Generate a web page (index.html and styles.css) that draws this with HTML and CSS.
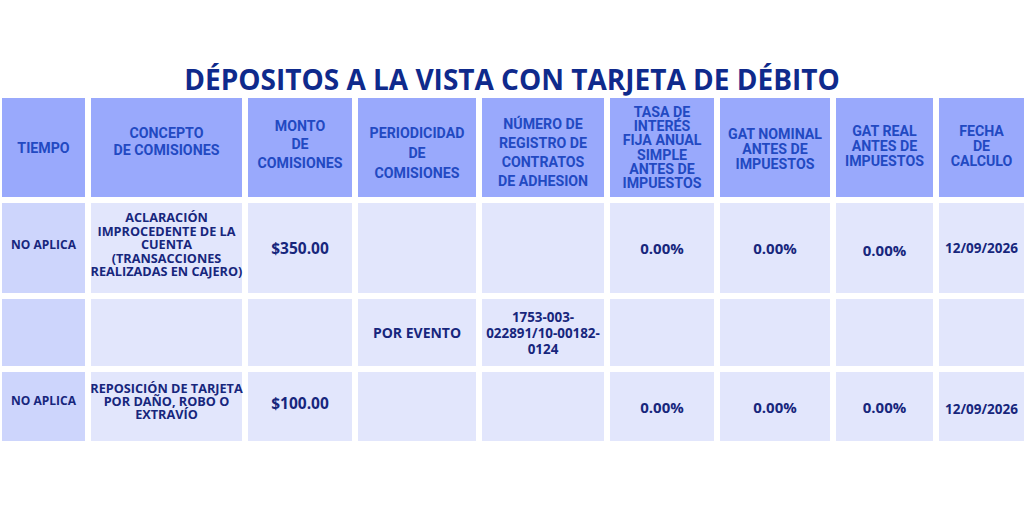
FILE: index.html
```html
<!DOCTYPE html>
<html lang="es">
<head>
<meta charset="utf-8">
<title>Depósitos a la vista con tarjeta de débito</title>
<link rel="stylesheet" href="styles.css">
</head>
<body>
<main class="page">
  <h1 class="title">DÉPOSITOS A LA VISTA CON TARJETA DE DÉBITO</h1>
  <div class="table">
    <div class="th">TIEMPO</div>
    <div class="th lh17 up6">CONCEPTO<br>DE COMISIONES</div>
    <div class="th lh18 up3">MONTO<br>DE<br>COMISIONES</div>
    <div class="th lh20 down5">PERIODICIDAD<br>DE<br>COMISIONES</div>
    <div class="th lh19 down5">NÚMERO DE<br>REGISTRO DE<br>CONTRATOS<br>DE ADHESION</div>
    <div class="th lh14">TASA DE<br>INTERÉS<br>FIJA ANUAL<br>SIMPLE<br>ANTES DE<br>IMPUESTOS</div>
    <div class="th lh15 down2">GAT NOMINAL<br>ANTES DE<br>IMPUESTOS</div>
    <div class="th lh15 up1">GAT REAL<br>ANTES DE<br>IMPUESTOS</div>
    <div class="th lh15 up1">FECHA<br>DE<br>CALCULO</div>

    <div class="td first sm up3">NO APLICA</div>
    <div class="td concept tight up3">ACLARACIÓN<br>IMPROCEDENTE DE LA<br>CUENTA<br>(TRANSACCIONES<br>REALIZADAS EN CAJERO)</div>
    <div class="td big">$350.00</div>
    <div class="td"></div>
    <div class="td"></div>
    <div class="td md">0.00%</div>
    <div class="td md">0.00%</div>
    <div class="td md down2">0.00%</div>
    <div class="td date">12/09/2026</div>

    <div class="td first"></div>
    <div class="td"></div>
    <div class="td"></div>
    <div class="td event">POR EVENTO</div>
    <div class="td reg">1753-003-<br>022891/10-00182-<br>0124</div>
    <div class="td"></div>
    <div class="td"></div>
    <div class="td"></div>
    <div class="td"></div>

    <div class="td first sm up6">NO APLICA</div>
    <div class="td concept tight13 up5">REPOSICIÓN DE TARJETA<br>POR DAÑO, ROBO O<br>EXTRAVÍO</div>
    <div class="td big up4">$100.00</div>
    <div class="td"></div>
    <div class="td"></div>
    <div class="td md">0.00%</div>
    <div class="td md">0.00%</div>
    <div class="td md">0.00%</div>
    <div class="td date down2">12/09/2026</div>
  </div>
</main>
</body>
</html>
```

FILE: styles.css
```css
html, body {
  margin: 0;
  padding: 0;
  background: #ffffff;
}

.page {
  width: 1024px;
  height: 512px;
  padding-top: 61px;
  box-sizing: border-box;
  overflow: hidden;
}

.title {
  margin: 0;
  height: 37px;
  line-height: 37px;
  text-align: center;
  font-family: "Open Sans", "Liberation Sans", sans-serif;
  font-weight: 700;
  font-size: 28px;
  color: #0f2a8c;
  white-space: nowrap;
}

.table {
  display: grid;
  grid-template-columns: 83px 151px 104px 118px 122px 104px 110px 97px 1fr;
  grid-template-rows: 99px 90px 67px 69px;
  gap: 6px;
  margin-left: 2px;
}

.th, .td {
  display: flex;
  align-items: center;
  justify-content: center;
  text-align: center;
  box-sizing: border-box;
  white-space: nowrap;
}

.th {
  background: #99a9fc;
  color: #2249c2;
  font-family: Roboto, "Liberation Sans", sans-serif;
  font-weight: 700;
  font-size: 14.2px;
  line-height: 18px;
}

.td {
  background: #e2e6fc;
  color: #17267c;
  font-family: "Open Sans", "Liberation Sans", sans-serif;
  font-weight: 700;
}

.td.first {
  background: #cdd5fc;
}

.lh14 { line-height: 14.3px; }
.lh15 { line-height: 15px; }
.lh17 { line-height: 17px; }
.lh18 { line-height: 18.5px; }
.lh19 { line-height: 19px; }
.lh20 { line-height: 20px; }

.up1 { padding-bottom: 2px; }
.up3 { padding-bottom: 6px; }
.up4 { padding-bottom: 8px; }
.up5 { padding-bottom: 10px; }
.up6 { padding-bottom: 12px; }
.down2 { padding-top: 4px; }
.down5 { padding-top: 10px; }

.sm { font-size: 12px; line-height: 14px; }
.concept { font-size: 12.7px; }
.tight { line-height: 13.4px; }
.tight13 { line-height: 13.2px; }
.big { font-size: 15.5px; }
.md { font-size: 15px; }
.date { font-size: 13.5px; }
.event { font-size: 14px; }
.reg { font-size: 13.4px; line-height: 16px; }
```
